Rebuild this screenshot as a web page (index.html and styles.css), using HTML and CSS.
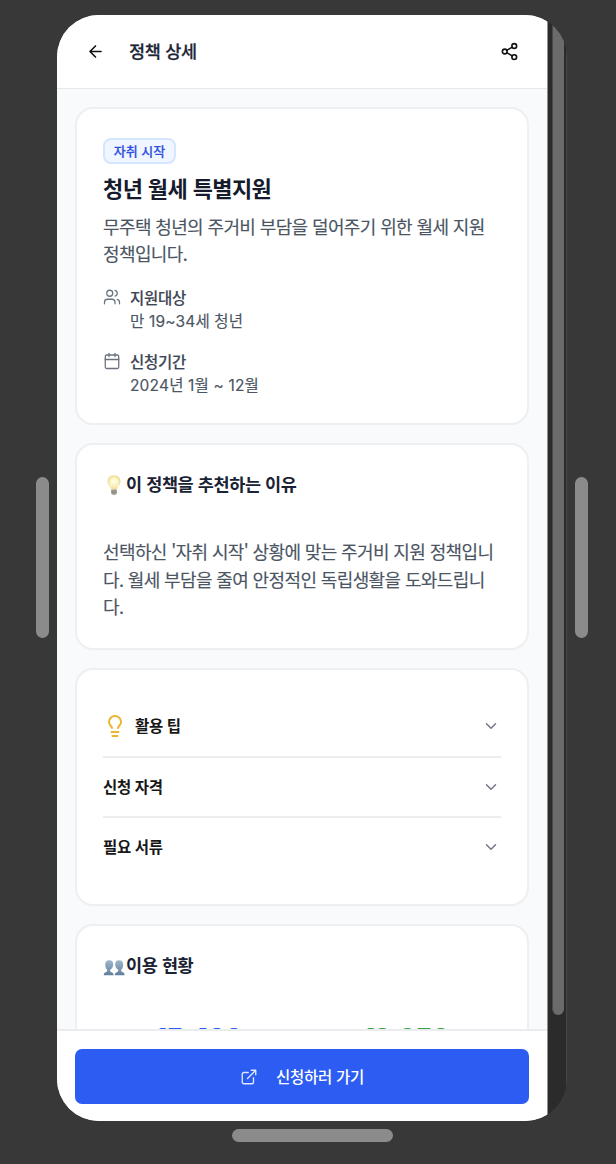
FILE: index.html
```html
<!DOCTYPE html>
<html lang="ko">
<head>
<meta charset="utf-8">
<title>정책 상세</title>
<link rel="stylesheet" href="styles.css">
</head>
<body>
<div class="stage">
  <span class="handle side"></span>
  <div class="device">
    <div class="screen">
      <header class="topbar">
        <svg class="back" viewBox="0 0 24 24"><path d="m12 19-7-7 7-7M19 12H5"/></svg>
        <h1>정책 상세</h1>
        <svg class="share" viewBox="0 0 24 24"><circle cx="18" cy="5" r="3"/><circle cx="6" cy="12" r="3"/><circle cx="18" cy="19" r="3"/><path d="m8.6 13.5 6.8 4M15.4 6.5l-6.8 4"/></svg>
      </header>
      <main class="content">
        <section class="card summary">
          <span class="badge">자취 시작</span>
          <h2>청년 월세 특별지원</h2>
          <p class="desc">무주택 청년의 주거비 부담을 덜어주기 위한 월세 지원<br>정책입니다.</p>
          <div class="info">
            <svg viewBox="0 0 24 24"><path d="M16 21v-2a4 4 0 0 0-4-4H6a4 4 0 0 0-4 4v2"/><circle cx="9" cy="7" r="4"/><path d="M22 21v-2a4 4 0 0 0-3-3.87M16 3.13a4 4 0 0 1 0 7.75"/></svg>
            <div><b>지원대상</b><span>만 19~34세 청년</span></div>
          </div>
          <div class="info">
            <svg viewBox="0 0 24 24"><path d="M8 2v4M16 2v4M3 10h18"/><rect x="3" y="4" width="18" height="18" rx="2"/></svg>
            <div><b>신청기간</b><span>2024년 1월 ~ 12월</span></div>
          </div>
        </section>
        <section class="card reason">
          <h3><svg class="emoji" viewBox="0 0 22 22">
            <defs><radialGradient id="glow"><stop offset="0" stop-color="#fffef0"/><stop offset=".55" stop-color="#fff8cb"/><stop offset="1" stop-color="#eed991"/></radialGradient></defs>
            <path d="M11 1.300c-4 0-6.400 2.800-6.400 6.300 0 3.700 3.200 4.700 3.600 8h5.600c.4-3.300 3.600-4.300 3.600-8 0-3.500-2.400-6.300-6.400-6.300z" fill="url(#glow)"/>
            <path d="M8.700 9.200 10 11v4.500M13.300 9.200 12 11v4.500" fill="none" stroke="#f3dd95" stroke-width=".6"/>
            <path d="M8.300 15.500h5.400v3.800l-1.500 1.800H9.800l-1.500-1.800z" fill="#aaa69f"/><path d="M8.300 17h5.400M8.500 18.800h5" stroke="#77736f" stroke-width=".7"/></svg><span>이 정책을 추천하는 이유</span></h3>
          <p class="desc">선택하신 '자취 시작' 상황에 맞는 주거비 지원 정책입니<br>다. 월세 부담을 줄여 안정적인 독립생활을 도와드립니<br>다.</p>
        </section>
        <section class="card accordion">
          <div class="row"><svg class="bulb" viewBox="0 0 24 24"><path d="M15 14c.2-1 .7-1.700 1.500-2.500 1-.9 1.500-2.200 1.500-3.500A6 6 0 0 0 6 8c0 1 .2 2.200 1.500 3.500.7.7 1.300 1.500 1.500 2.500M8.500 18h7M9.500 22h5"/></svg><span>활용 팁</span><svg class="chev" viewBox="0 0 24 24"><path d="m6 9 6 6 6-6"/></svg></div>
          <div class="row"><span>신청 자격</span><svg class="chev" viewBox="0 0 24 24"><path d="m6 9 6 6 6-6"/></svg></div>
          <div class="row"><span>필요 서류</span><svg class="chev" viewBox="0 0 24 24"><path d="m6 9 6 6 6-6"/></svg></div>
        </section>
        <section class="card usage">
          <h3><svg class="emoji people" viewBox="0 0 22 22">
            <defs><linearGradient id="person" x2="0" y2="1"><stop stop-color="#9fb7cb"/><stop offset="1" stop-color="#617f9d"/></linearGradient></defs>
            <g fill="url(#person)"><path d="M6.400 5.200c-3 0-4.400 2-4.200 4.800.1 2.200.8 3.700 2 4.800.2 1.600-.3 2-1.700 2.500C1.200 17.800.8 18.600.8 20.200h9.800c0-1.700-.7-2.600-2-3-1.300-.4-1.700-.9-1.500-2.400 1.700-1 2.900-2.500 3.100-4.800.2-2.800-.9-4.800-3.800-4.800z"/><path d="M16 5.200c3 0 4.400 2 4.200 4.800-.1 2.200-.8 3.700-2 4.800-.2 1.600.3 2 1.700 2.500 1.300.5 1.700 1.300 1.700 2.900h-9.800c0-1.700.7-2.600 2-3 1.300-.4 1.700-.9 1.500-2.400-1.700-1-2.900-2.500-3.100-4.800-.2-2.800.9-4.800 3.800-4.800z"/></g></svg><span>이용 현황</span></h3>
          <div class="stats"><strong class="blue">15,420</strong><strong class="green">12,350</strong></div>
        </section>
      </main>
      <footer class="bottom">
        <div class="apply"><svg viewBox="0 0 24 24"><path d="M15 3h6v6M10 14 21 3M18 13v6a2 2 0 0 1-2 2H5a2 2 0 0 1-2-2V8a2 2 0 0 1 2-2h6"/></svg><span>신청하러 가기</span></div>
      </footer>
    </div>
    <div class="track"><div class="thumb"></div></div>
  </div>
  <span class="handle side"></span>
  <span class="handle base"></span>
</div>
</body>
</html>
```
FILE: styles.css
```css
* { box-sizing: border-box; }
body { margin: 0; background: #383838; font-family: "Noto Sans CJK KR", sans-serif; }
h1, h2, h3, p { margin: 0; }
svg { flex: none; fill: none; stroke: currentColor; stroke-width: 2; stroke-linecap: round; stroke-linejoin: round; }
.stage { width: 616px; height: 1164px; padding: 15px 0 0 36px; display: grid; grid-template-columns: 13px 510px 13px; grid-template-rows: 1106px 13px; column-gap: 8px; row-gap: 8px; white-space: nowrap; }
.handle { background: #8b8b8b; border-radius: 7px; }
.side { width: 13px; height: 161px; margin-top: 462px; }
.base { grid-column: 2; width: 161px; height: 13px; margin-left: 175px; }
.device { display: flex; width: 510px; height: 1106px; border-radius: 42px; overflow: hidden; background: #2b2b2b; }
.screen { width: 490px; height: 1106px; display: flex; flex-direction: column; background: #f9fafc; }
.track { flex: 1; padding-left: 4px; border-left: 1px solid #8d8f92; border-right: 1px solid #484848; }
.thumb { width: 12px; height: 1000px; border-left: 1px solid #4a4a4a; border-radius: 0 0 6px 6px; background: #6b6b6b; }
.topbar { height: 74px; flex: none; display: flex; align-items: center; padding: 0 28px 0 29px; background: #fff; border-bottom: 1.5px solid #e5e7eb; }
.back, .share { width: 19px; height: 19px; color: #111; }
.topbar h1 { margin-left: 24px; padding-bottom: 2px; flex: 1; font-size: 17.500px; letter-spacing: -.3px; font-weight: 500; color: #1e2638; -webkit-text-stroke: .25px; }
.content { flex: 1; min-height: 0; overflow: hidden; padding: 18px 18px 0; display: flex; flex-direction: column; gap: 18px; }
.card { flex: none; background: #fff; border: 2px solid #eeeff1; border-radius: 18px; padding: 0 26px; }
.summary { height: 318px; padding-top: 29px; }
.badge { display: flex; align-items: center; justify-content: center; width: 73px; height: 26px; padding-bottom: 2px; border: 2px solid #d3e5ff; border-radius: 8px; background: #eff6ff; color: #304fe0; font-size: 13px; font-weight: 500; -webkit-text-stroke: .2px; }
h2 { margin-top: 6px; line-height: 34px; font-size: 22px; letter-spacing: -.6px; font-weight: 700; color: #151b2c; }
.desc { font-size: 18px; letter-spacing: -.62px; line-height: 27.500px; color: #4b5563; -webkit-text-stroke: .15px; }
.summary .desc { margin-top: 9px; line-height: 27px; }
.info { display: flex; gap: 9px; height: 63.500px; color: #4b5563; }
.summary .desc + .info { margin-top: 20px; }
.info svg { width: 18px; height: 18px; margin-top: 1px; stroke-width: 1.700; color: #6b7280; }
.info div { display: flex; flex-direction: column; font-family: Inter, "Noto Sans CJK KR", sans-serif; font-size: 15.500px; line-height: 23px; }
.info span { letter-spacing: .17px; -webkit-text-stroke: .15px; }
.info b { font-weight: 500; letter-spacing: -.25px; color: #3d4656; -webkit-text-stroke: .15px; }
.reason { height: 207px; padding-top: 27px; }
h3 { display: flex; align-items: center; height: 28px; font-size: 17.500px; letter-spacing: -.4px; font-weight: 700; color: #1a2234; }
h3 span { padding-bottom: 5px; }
.emoji { width: 22px; height: 22px; stroke: none; margin: -3px 1px 0 0; }
.reason .desc { margin-top: 38px; }
.accordion { height: 238px; padding-top: 27px; }
.row { display: flex; align-items: center; height: 60.500px; border-bottom: 2px solid #ededef; font-size: 15.500px; letter-spacing: -.35px; font-weight: 700; color: #171717; }
.row span { padding-bottom: 2px; }
.row:last-child { border-bottom: 0; height: 57px; }
.bulb { width: 24px; height: 24px; margin-right: 8px; color: #eab62d; }
.chev { width: 18px; height: 18px; margin: 0 1px 0 auto; color: #77758a; }
.usage { height: 220px; padding-top: 27px; }
.emoji.people { margin-top: -2px; }
.stats { display: grid; grid-template-columns: 1fr 1fr; gap: 18px; margin-top: 39px; padding-left: 1px; font: 700 25.500px/36px Inter, sans-serif; letter-spacing: -.5px; text-align: center; }
.blue { color: #2c5df5; }
.green { color: #36a34a; }
.bottom { height: 92px; flex: none; padding: 18px; background: #fff; border-top: 2px solid #eaecef; }
.apply { height: 55px; border-radius: 7px; background: #2c5cf2; color: #fff; display: flex; align-items: center; justify-content: center; gap: 18px; font-size: 15.500px; letter-spacing: -.3px; font-weight: 500; }
.apply span { padding-bottom: 2px; }
.apply svg { width: 18px; height: 18px; stroke-width: 1.800; opacity: .85; }
```
